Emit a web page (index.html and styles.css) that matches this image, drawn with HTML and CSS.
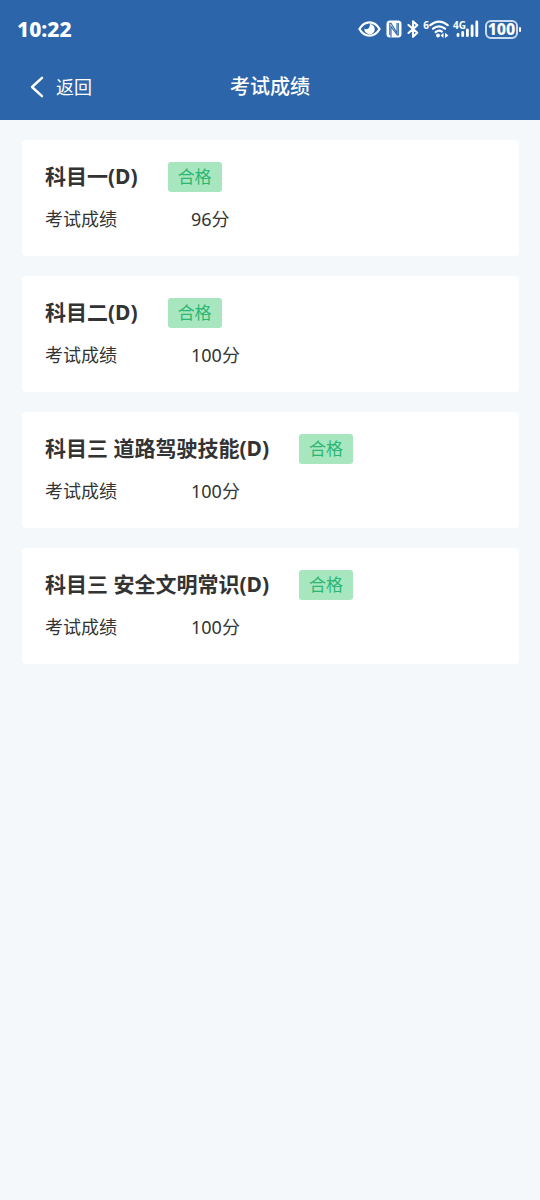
FILE: index.html
```html
<!DOCTYPE html>
<html lang="zh-CN">
<head>
<meta charset="utf-8">
<meta name="viewport" content="width=device-width, initial-scale=1">
<title>考试成绩</title>
<link rel="stylesheet" href="styles.css">
</head>
<body>
<header class="header">
  <div class="status">
    <span class="time">10:22</span>
    <div class="status-icons">
      <svg class="eye" width="23" height="18" viewBox="0 0 24 18" fill="none" stroke="currentColor" stroke-width="2.300">
        <path d="M1.500 9C4 4.600 8 2 12 2S20 4.600 22.500 9C20 13.400 16 16 12 16S4 13.400 1.500 9Z"/>
        <path d="M12.500 3.800A5.400 5.400 0 1 1 6.700 8.500Q8.500 9.800 10.500 8.700Q12.500 7.500 12.500 3.800Z" fill="currentColor" stroke="none"/>
      </svg>
      <svg class="nfc" width="16" height="18" viewBox="0 0 16 18" fill="none">
        <rect x="0.500" y="0.500" width="15" height="17" rx="3.500" fill="currentColor"/>
        <path d="M3.800 15V3.200H5L11 13V3" stroke="#2c65aa" stroke-width="1.100"/>
        <path d="M5 17.500V6.500L11.200 15H12.300V3" stroke="#2c65aa" stroke-width="1.100"/>
      </svg>
      <svg class="bluetooth" width="12" height="18" viewBox="0 0 12 18" fill="none" stroke="currentColor" stroke-width="2.100" stroke-linejoin="round" stroke-linecap="round">
        <path d="M1.500 5L10.300 12.800L6 16.800V1.200L10.300 5.200L1.500 13"/>
      </svg>
      <span class="mark">6</span>
      <svg class="wifi" width="20" height="18" viewBox="0 0 20 18" fill="none" stroke="currentColor" stroke-width="2.200" stroke-linecap="round">
        <path d="M1.300 5.200Q10-2 18.700 5.200M4 8.700Q10 4 16 8.700M6.700 12Q10 9.600 12.800 11.500"/>
        <circle cx="9" cy="15.500" r="1.900" fill="currentColor" stroke="none"/>
        <path d="M11.500 15.500L14.500 12.800V18ZM19.500 15.500L16 12.800V18Z" fill="currentColor" stroke="none"/>
      </svg>
      <span class="mark">4G</span>
      <svg class="signal" width="23" height="18" viewBox="0 0 23 18" fill="none" stroke="currentColor" stroke-width="2.800" stroke-linecap="round">
        <path d="M2 15.700V14.500M6.700 15.700V12.500M11.400 15.700V10M16.100 15.700V6M20.800 15.700V2"/>
      </svg>
      <span class="battery">100</span>
    </div>
  </div>
  <nav class="nav">
    <button class="back" type="button">
      <svg width="14" height="22" viewBox="0 0 14 22" fill="none" stroke="currentColor" stroke-width="2.400" stroke-linecap="round" stroke-linejoin="round"><path d="M12 1.800L2 11L12 20.200"/></svg>
      返回
    </button>
    <h1 class="title">考试成绩</h1>
  </nav>
</header>
<main class="results">
  <section class="card">
    <div class="card-head"><h2 class="subject">科目一(D)</h2><span class="badge">合格</span></div>
    <dl class="score"><dt>考试成绩</dt><dd>96分</dd></dl>
  </section>
  <section class="card">
    <div class="card-head"><h2 class="subject">科目二(D)</h2><span class="badge">合格</span></div>
    <dl class="score"><dt>考试成绩</dt><dd>100分</dd></dl>
  </section>
  <section class="card">
    <div class="card-head"><h2 class="subject">科目三 道路驾驶技能(D)</h2><span class="badge">合格</span></div>
    <dl class="score"><dt>考试成绩</dt><dd>100分</dd></dl>
  </section>
  <section class="card">
    <div class="card-head"><h2 class="subject">科目三 安全文明常识(D)</h2><span class="badge">合格</span></div>
    <dl class="score"><dt>考试成绩</dt><dd>100分</dd></dl>
  </section>
</main>
</body>
</html>
```

FILE: styles.css
```css
* {
  box-sizing: border-box;
}

body {
  margin: 0;
  min-height: 100vh;
  background: #f4f8fa;
  color: #333;
  font-family: "Noto Sans", "Noto Sans CJK SC", sans-serif;
}

h1, h2, dl, dd {
  margin: 0;
}

.header {
  background: #2c65aa;
  color: #fff;
}

.status {
  display: flex;
  align-items: center;
  justify-content: space-between;
  height: 58px;
  padding: 0 22px 0 17px;
}

.time {
  font-size: 21px;
  font-weight: 800;
  line-height: 30px;
}

.status-icons {
  display: flex;
  align-items: center;
}

.status-icons svg {
  display: block;
}

.nfc {
  margin: 0 5px;
}

.mark {
  align-self: flex-start;
  margin-left: 4px;
  font-size: 10px;
  font-weight: 700;
  line-height: 10px;
}

.signal {
  margin-left: -10px;
}

.battery {
  position: relative;
  margin-left: 6px;
  width: 33px;
  border: 2px solid #c9dcf0;
  border-radius: 6px;
  font-size: 16px;
  font-weight: 800;
  line-height: 15px;
  text-align: center;
}

.battery::after {
  content: "";
  position: absolute;
  top: 5px;
  right: -5px;
  width: 2px;
  height: 5px;
  border-radius: 1px;
  background: #fff;
}

.nav {
  display: grid;
  grid-template-columns: 1fr auto 1fr;
  align-items: center;
  height: 62px;
  padding: 0 30px 4px;
}

.back {
  display: flex;
  align-items: center;
  justify-self: start;
  gap: 12px;
  padding: 0;
  border: 0;
  background: none;
  color: inherit;
  font: inherit;
  font-size: 18px;
  line-height: 28px;
}

.title {
  font-size: 20px;
  font-weight: 500;
  line-height: 28px;
}

.results {
  display: grid;
  gap: 20px;
  padding: 20px 21px 20px 22px;
}

.card {
  padding: 22px 23px;
  border-radius: 4px;
  background: #fff;
}

.card-head {
  display: flex;
  align-items: flex-start;
  gap: 30px;
}

.subject {
  font-size: 21px;
  font-weight: 700;
  line-height: 28px;
}

.badge {
  padding: 0 10px;
  border-radius: 3px;
  background: #a8e6bf;
  color: #2bb673;
  font-size: 17px;
  line-height: 30px;
}

.score {
  display: grid;
  grid-template-columns: 146px 1fr;
  margin-top: 12px;
  font-size: 18px;
  line-height: 30px;
}
```
